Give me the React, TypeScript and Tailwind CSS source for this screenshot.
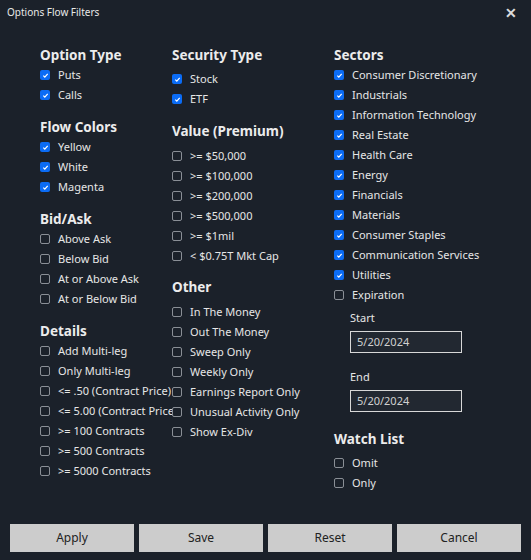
import React from 'react';

const Box: React.FC<{ on?: boolean }> = ({ on }) =>
  on ? (
    <span className="w-[10px] h-[10px] rounded-[2px] bg-[#0b6cf5] flex items-center justify-center shrink-0">
      <svg width="7" height="7" viewBox="0 0 8 8"><path d="M1.5 4.2 L3.2 5.8 L6.5 2.2" stroke="#fff" strokeWidth="1.4" fill="none" /></svg>
    </span>
  ) : (
    <span className="w-[10px] h-[10px] rounded-[2px] border border-[#8a8f96] bg-[#1b212a] shrink-0" />
  );

const Item: React.FC<{ label: string; on?: boolean }> = ({ label, on }) => (
  <div className="h-[20px] flex items-center gap-[8px] text-[11px] text-[#e6e6e6] whitespace-nowrap">
    <Box on={on} />
    <span>{label}</span>
  </div>
);

const Head: React.FC<{ t: string; cls?: string }> = ({ t, cls = '' }) => (
  <div className={`h-[20px] flex items-center text-[13.5px] font-bold text-[#ececec] whitespace-nowrap ${cls}`}>{t}</div>
);

const DateBox: React.FC = () => (
  <div className="ml-[16px] w-[112px] h-[22px] border border-[#d8d8d8] bg-[#222831] text-[11px] text-[#d0d0d0] flex items-center px-[6px]">5/20/2024</div>
);

export default function App() {
  return (
    <div className="w-[531px] h-[560px] bg-[#1b212a] text-white flex flex-col" style={{ fontFamily: '"Noto Sans", "Open Sans", sans-serif' }}>
      <div className="h-[24px] flex items-center justify-between px-[7px]">
        <span className="text-[10px] text-[#e8e8e8]">Options Flow Filters</span>
        <span className="text-[14px] font-bold text-[#dcdcdc] mr-[7px]">✕</span>
      </div>
      <div className="flex pt-[21px] flex-1">
        <div className="w-[172px] shrink-0 pl-[40px] flex flex-col">
          <Head t="Option Type" />
          <Item label="Puts" on />
          <Item label="Calls" on />
          <Head t="Flow Colors" cls="mt-[12px]" />
          <Item label="Yellow" on />
          <Item label="White" on />
          <Item label="Magenta" on />
          <Head t="Bid/Ask" cls="mt-[12px]" />
          <Item label="Above Ask" />
          <Item label="Below Bid" />
          <Item label="At or Above Ask" />
          <Item label="At or Below Bid" />
          <Head t="Details" cls="mt-[12px]" />
          <Item label="Add Multi-leg" />
          <Item label="Only Multi-leg" />
          <Item label="<= .50 (Contract Price)" />
          <Item label="<= 5.00 (Contract Price)" />
          <Item label=">= 100 Contracts" />
          <Item label=">= 500 Contracts" />
          <Item label=">= 5000 Contracts" />
        </div>
        <div className="w-[162px] shrink-0 flex flex-col">
          <Head t="Security Type" cls="mb-[4px]" />
          <Item label="Stock" on />
          <Item label="ETF" on />
          <Head t="Value (Premium)" cls="mt-[12px] mb-[5px]" />
          <Item label=">= $50,000" />
          <Item label=">= $100,000" />
          <Item label=">= $200,000" />
          <Item label=">= $500,000" />
          <Item label=">= $1mil" />
          <Item label="< $0.75T Mkt Cap" />
          <Head t="Other" cls="mt-[11px] mb-[5px]" />
          <Item label="In The Money" />
          <Item label="Out The Money" />
          <Item label="Sweep Only" />
          <Item label="Weekly Only" />
          <Item label="Earnings Report Only" />
          <Item label="Unusual Activity Only" />
          <Item label="Show Ex-Div" />
        </div>
        <div className="flex-1 flex flex-col">
          <Head t="Sectors" />
          {['Consumer Discretionary', 'Industrials', 'Information Technology', 'Real Estate', 'Health Care', 'Energy', 'Financials', 'Materials', 'Consumer Staples', 'Communication Services', 'Utilities'].map(s => (
            <Item key={s} label={s} on />
          ))}
          <Item label="Expiration" />
          <div className="ml-[16px] mt-[5px] h-[16px] text-[11px] text-[#e6e6e6] flex items-center">Start</div>
          <div className="mt-[5px]"><DateBox /></div>
          <div className="ml-[16px] mt-[16px] h-[16px] text-[11px] text-[#e6e6e6] flex items-center">End</div>
          <div className="mt-[5px]"><DateBox /></div>
          <Head t="Watch List" cls="mt-[17px] mb-[4px]" />
          <Item label="Omit" />
          <Item label="Only" />
        </div>
      </div>
      <div className="flex gap-[5px] px-[10px] pb-[8px]">
        {['Apply', 'Save', 'Reset', 'Cancel'].map(b => (
          <button key={b} className="flex-1 h-[28px] bg-[#cccccc] text-[#222] text-[12px]">{b}</button>
        ))}
      </div>
    </div>
  );
}
